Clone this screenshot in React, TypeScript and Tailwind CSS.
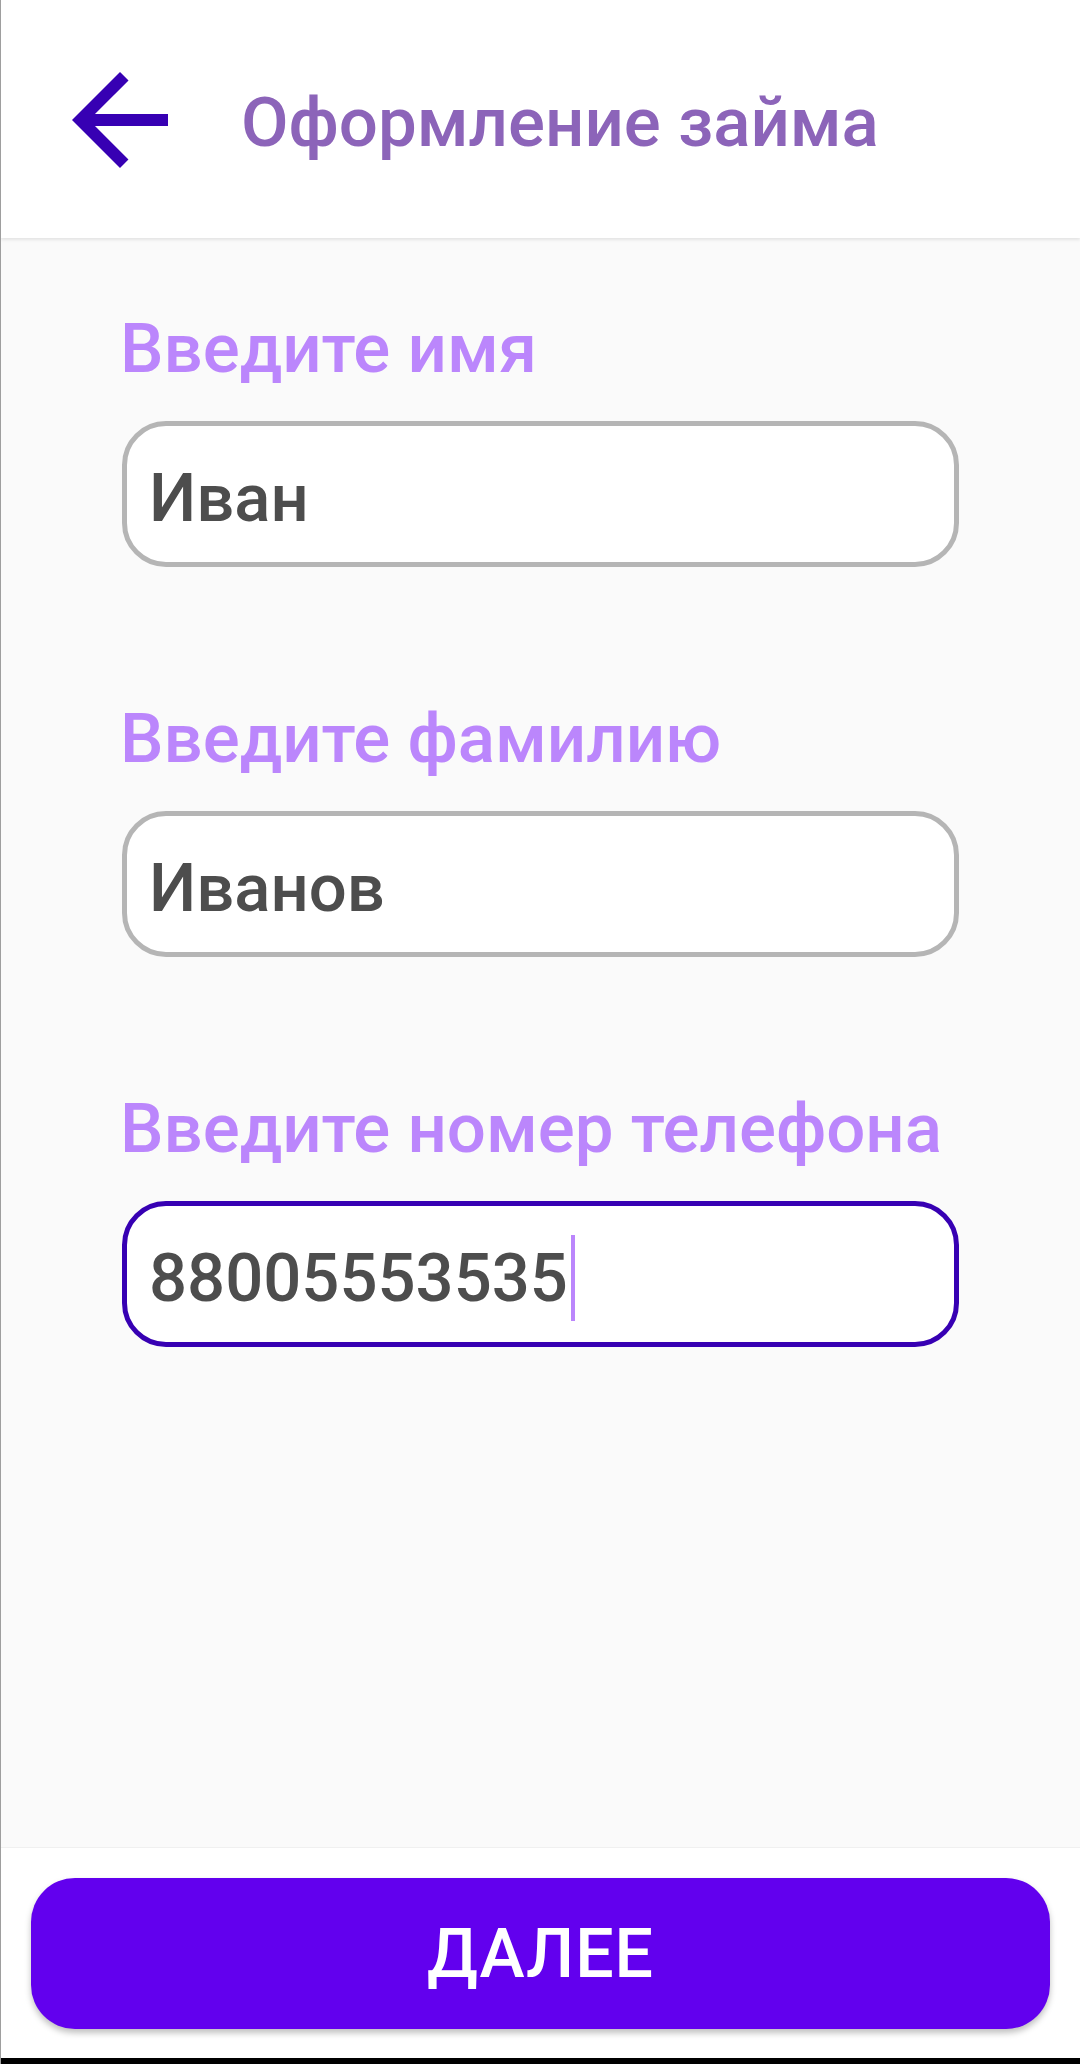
import React from "react";

function Field({ label, value, focused }: { label: string; value: string; focused?: boolean }) {
  return (
    <div className="flex flex-col mb-[137px]">
      <div className="ml-[-2px] h-[69px] text-[69px] leading-none font-medium text-[#bb86fc] whitespace-nowrap">
        {label}
      </div>
      <div
        className={
          focused
            ? "mt-[38px] w-[837px] h-[146px] rounded-[44px] bg-white border-[5px] border-[#3700b3] pl-[22px] pt-[38px]"
            : "mt-[38px] w-[837px] h-[146px] rounded-[44px] bg-white border-[5px] border-[#b5b5b5] pl-[22px] pt-[38px]"
        }
      >
        <div className="h-[68px] flex items-center text-[67px] leading-none font-medium text-[#4d4d4d] whitespace-nowrap">
          <span>{value}</span>
          {focused && <span className="ml-[3px] w-[4px] h-[86px] bg-[#bb86fc] shrink-0" />}
        </div>
      </div>
    </div>
  );
}

export default function App() {
  return (
    <div className="w-[1080px] h-[2064px] flex flex-col bg-[#fafafa] border-l border-[#9e9e9e] overflow-hidden font-['Roboto','Noto_Sans',sans-serif]">
      <header className="h-[238px] shrink-0 bg-white flex items-start relative z-10 shadow-[0_2px_3px_rgba(0,0,0,0.09)]">
        <svg className="mt-[48px] ml-[47px] w-[144px] h-[144px] shrink-0" viewBox="0 0 24 24">
          <path fill="#3700b3" d="M20 11H7.83l5.59-5.59L12 4l-8 8 8 8 1.41-1.41L7.83 13H20v-2z" />
        </svg>
        <h1 className="mt-[88px] ml-[49px] text-[69px] leading-none font-medium text-[#8c64b9] whitespace-nowrap">
          Оформление займа
        </h1>
      </header>
      <main className="flex-1 flex flex-col pt-[76px] pl-[121px]">
        <Field label="Введите имя" value="Иван" />
        <Field label="Введите фамилию" value="Иванов" />
        <Field label="Введите номер телефона" value="88005553535" focused />
      </main>
      <footer className="h-[211px] shrink-0 bg-white pt-[30px] pl-[30px] pr-[30px] border-t border-[#f0f0f0]">
        <button className="w-full h-[151px] rounded-[44px] bg-[#6200ee] text-white text-[68px] leading-none font-medium tracking-[1px] shadow-[0_4px_6px_rgba(0,0,0,0.25)] flex items-center justify-center">
          ДАЛЕЕ
        </button>
      </footer>
      <div className="h-[6px] shrink-0 bg-black" />
    </div>
  );
}
